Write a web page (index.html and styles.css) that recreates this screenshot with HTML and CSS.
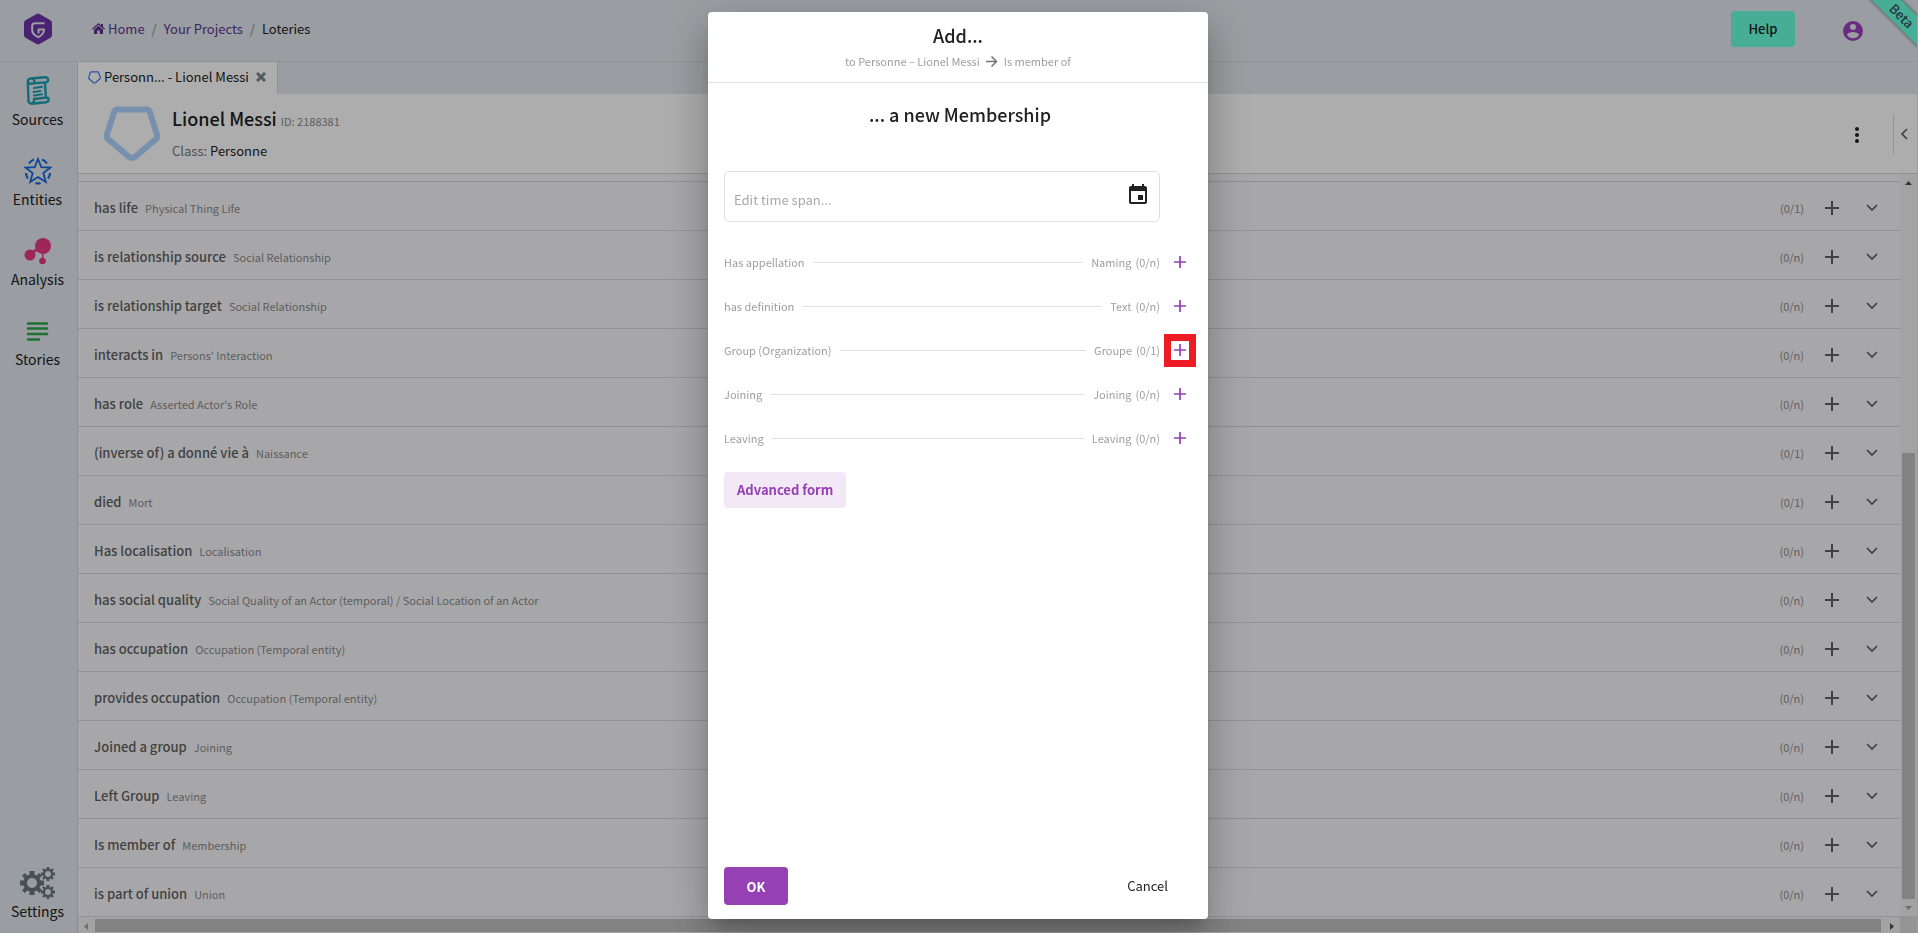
FILE: index.html
```html
<!doctype html>
<html lang="en">
<head>
  <meta charset="UTF-8"/>
  <meta content="width=device-width, initial-scale=1" name="viewport">
  <title>Loteries</title>
  <link rel="stylesheet" href="styles.css">
</head>
<body>
<svg class="sprite" aria-hidden="true">
  <symbol id="plus" viewBox="0 0 14 14"><path d="M6 0h2v6h6v2H8v6H6V8H0V6h6z"/></symbol>
  <symbol id="chevron" viewBox="0 0 12 8"><path d="M1 1l5 5 5-5" fill="none" stroke="currentColor" stroke-width="1.700"/></symbol>
  <symbol id="pentagon" viewBox="0 0 56 56"><path d="M14 3.500h28q3 0 4 3l7 22q1 3-1.500 5l-20 17q-3.500 2.500-7 0l-20-17Q2 31.500 3 28.500l7-22q1-3 4-3z" fill="none" stroke="currentColor" stroke-linejoin="round"/></symbol>
  <symbol id="gear" viewBox="0 0 24 24"><path fill-rule="evenodd" d="M9.500 0h5v3.500l2.200.9L19.200 2 22 4.800l-2.400 2.500.9 2.200H24v5h-3.500l-.9 2.200 2.400 2.500-2.800 2.800-2.500-2.400-2.200.9V24h-5v-3.500l-2.200-.9L4.800 22 2 19.200l2.400-2.500-.9-2.200H0v-5h3.500l.9-2.200L2 4.800 4.800 2l2.500 2.400 2.200-.9zM12 7a5 5 0 1 0 0 10 5 5 0 0 0 0-10z"/></symbol>
</svg>

<div class="app">
  <header class="topbar">
    <a class="logo" href="#" aria-label="Start">
      <svg width="28" height="32" viewBox="0 0 28 32"><path fill="#6e33a9" d="M12.500 1q1.500-.9 3 0l11 6.300Q28 8.200 28 10v12q0 1.800-1.500 2.700l-11 6.300q-1.500.9-3 0l-11-6.300Q0 23.800 0 22V10q0-1.800 1.500-2.700z"/><path fill="none" stroke="#e4e8ee" stroke-width="2" stroke-linejoin="round" d="M20.500 10.200H11q-2.800 0-2.800 2.500v4.500q0 4.300 6.300 7 5.500-3 5.500-7.700h-5.500v4"/></svg>
    </a>
    <nav class="breadcrumb">
      <a href="#"><svg class="home" width="13" height="11" viewBox="0 0 13 11"><path d="M6.500 0L9 2.200V1h2v3l2 1.800-.8.900L6.500 1.700.8 6.700 0 5.800zM6.500 2.800L11 6.700V11H7.800V7.600H5.200V11H2V6.700z"/></svg>Home</a>
      <span class="sep">/</span>
      <a href="#">Your Projects</a>
      <span class="sep">/</span>
      <span>Loteries</span>
    </nav>
    <button class="help" type="button">Help</button>
    <button class="user" type="button" aria-label="Account">
      <svg width="20" height="20" viewBox="0 0 20 20"><path fill-rule="evenodd" d="M10 0a10 10 0 1 0 0 20 10 10 0 0 0 0-20zm0 3a3 3 0 1 1 0 6 3 3 0 0 1 0-6zm0 14.200a7.200 7.200 0 0 1-6-3.200c0-2 4-3.100 6-3.100s6 1.100 6 3.100a7.200 7.200 0 0 1-6 3.200z"/></svg>
    </button>
    <div class="ribbon"><span>Beta</span></div>
  </header>

  <nav class="sidebar">
    <a href="#">
      <svg width="24" height="29" viewBox="0 1 24 29"><g fill="none" stroke="#1ba0b4" stroke-width="2.400" stroke-linecap="round" stroke-linejoin="round"><path d="M4.500 3.500L19 2.200c4-.2 4.500 5.100 0 5.200L8 8.300M4.500 3.500C1 4 1.500 9 4.500 8.800L8 8.300C9 5 7.500 3 4.500 3.500zM1.800 6.500L2.500 26c.5 4 6.500 3 5.500-2l12-1.500c3.500 0 3.500 4.300 0 4.800L5.500 28.700M19 7.500l.8 14.500"/><path stroke-width="2" d="M8 13l8-1.200M7.500 17l7-1M8 20.500l8-1.200"/></g></svg>
      Sources
    </a>
    <a href="#">
      <svg width="28" height="28" viewBox="0 0 28 28"><g fill="none" stroke="#1668e0"><path stroke-width="1.800" d="M14 2l3.300 8.200 9 .4-7 5.500 2.500 8.900-7.800-5-7.800 5 2.500-8.900-7-5.500 9-.4z"/><path stroke-width="2.200" d="M5 6.500q2-3 5-4M18 2.500q3 1 5 4M2 16q0 3 2 5.500M26 16q0 3-2 5.500M11.500 26q2.500 1 5 0"/></g></svg>
      Entities
    </a>
    <a href="#">
      <svg width="28" height="28" viewBox="0 0 28 28"><g fill="#e83a82"><circle cx="19" cy="9" r="8"/><circle cx="6" cy="18" r="5.500"/><circle cx="18.500" cy="24" r="3.300"/><path d="M18 14h1.500v9H18zM8 14l6-4 1.500 2.500-6 4z"/></g></svg>
      Analysis
    </a>
    <a href="#">
      <svg width="28" height="28" viewBox="0 0 28 28"><path d="M4 6.500h19M4 11.500h19M4 17h19M4 22.500h11" stroke="#27a844" stroke-width="2.600" stroke-linecap="round"/></svg>
      Stories
    </a>
    <a class="settings" href="#">
      <svg class="gears" width="36" height="32" viewBox="0 0 36 32"><use href="#gear" x="0" y="4" width="24" height="24"/><use href="#gear" x="21" y="0" width="14" height="14"/><use href="#gear" x="21" y="18" width="14" height="14"/></svg>
      Settings
    </a>
  </nav>

  <main class="content">
    <div class="tabs">
      <div class="tab">
        <svg class="tab-icon" width="13" height="13"><use href="#pentagon"/></svg>
        <span>Personn... - Lionel Messi</span>
        <button type="button" aria-label="Close tab"><svg width="10" height="10" viewBox="0 0 10 10"><path d="M1 1l8 8M9 1L1 9" stroke="#7b8488" stroke-width="3"/></svg></button>
      </div>
    </div>

    <section class="entity">
      <svg class="entity-icon" width="56" height="56"><use href="#pentagon"/></svg>
      <div class="entity-text">
        <h1>Lionel Messi <small>ID: 2188381</small></h1>
        <p>Class: <span>Personne</span></p>
      </div>
      <button class="more" type="button" aria-label="More"><svg width="4" height="16" viewBox="0 0 4 16"><circle cx="2" cy="2" r="2"/><circle cx="2" cy="8" r="2"/><circle cx="2" cy="14" r="2"/></svg></button>
      <button class="collapse" type="button" aria-label="Open panel"><svg width="12" height="8"><use href="#chevron"/></svg></button>
    </section>

    <div class="scroller">
      <ul class="fields">
        <li><b>has life</b><span>Physical Thing Life</span><em>(0/1)</em><button aria-label="Add"><svg width="14" height="14"><use href="#plus"/></svg></button><button aria-label="Expand"><svg width="12" height="8"><use href="#chevron"/></svg></button></li>
        <li><b>is relationship source</b><span>Social Relationship</span><em>(0/n)</em><button aria-label="Add"><svg width="14" height="14"><use href="#plus"/></svg></button><button aria-label="Expand"><svg width="12" height="8"><use href="#chevron"/></svg></button></li>
        <li><b>is relationship target</b><span>Social Relationship</span><em>(0/n)</em><button aria-label="Add"><svg width="14" height="14"><use href="#plus"/></svg></button><button aria-label="Expand"><svg width="12" height="8"><use href="#chevron"/></svg></button></li>
        <li><b>interacts in</b><span>Persons' Interaction</span><em>(0/n)</em><button aria-label="Add"><svg width="14" height="14"><use href="#plus"/></svg></button><button aria-label="Expand"><svg width="12" height="8"><use href="#chevron"/></svg></button></li>
        <li><b>has role</b><span>Asserted Actor's Role</span><em>(0/n)</em><button aria-label="Add"><svg width="14" height="14"><use href="#plus"/></svg></button><button aria-label="Expand"><svg width="12" height="8"><use href="#chevron"/></svg></button></li>
        <li><b>(inverse of) a donné vie à</b><span>Naissance</span><em>(0/1)</em><button aria-label="Add"><svg width="14" height="14"><use href="#plus"/></svg></button><button aria-label="Expand"><svg width="12" height="8"><use href="#chevron"/></svg></button></li>
        <li><b>died</b><span>Mort</span><em>(0/1)</em><button aria-label="Add"><svg width="14" height="14"><use href="#plus"/></svg></button><button aria-label="Expand"><svg width="12" height="8"><use href="#chevron"/></svg></button></li>
        <li><b>Has localisation</b><span>Localisation</span><em>(0/n)</em><button aria-label="Add"><svg width="14" height="14"><use href="#plus"/></svg></button><button aria-label="Expand"><svg width="12" height="8"><use href="#chevron"/></svg></button></li>
        <li><b>has social quality</b><span>Social Quality of an Actor (temporal) / Social Location of an Actor</span><em>(0/n)</em><button aria-label="Add"><svg width="14" height="14"><use href="#plus"/></svg></button><button aria-label="Expand"><svg width="12" height="8"><use href="#chevron"/></svg></button></li>
        <li><b>has occupation</b><span>Occupation (Temporal entity)</span><em>(0/n)</em><button aria-label="Add"><svg width="14" height="14"><use href="#plus"/></svg></button><button aria-label="Expand"><svg width="12" height="8"><use href="#chevron"/></svg></button></li>
        <li><b>provides occupation</b><span>Occupation (Temporal entity)</span><em>(0/n)</em><button aria-label="Add"><svg width="14" height="14"><use href="#plus"/></svg></button><button aria-label="Expand"><svg width="12" height="8"><use href="#chevron"/></svg></button></li>
        <li><b>Joined a group</b><span>Joining</span><em>(0/n)</em><button aria-label="Add"><svg width="14" height="14"><use href="#plus"/></svg></button><button aria-label="Expand"><svg width="12" height="8"><use href="#chevron"/></svg></button></li>
        <li><b>Left Group</b><span>Leaving</span><em>(0/n)</em><button aria-label="Add"><svg width="14" height="14"><use href="#plus"/></svg></button><button aria-label="Expand"><svg width="12" height="8"><use href="#chevron"/></svg></button></li>
        <li><b>Is member of</b><span>Membership</span><em>(0/n)</em><button aria-label="Add"><svg width="14" height="14"><use href="#plus"/></svg></button><button aria-label="Expand"><svg width="12" height="8"><use href="#chevron"/></svg></button></li>
        <li><b>is part of union</b><span>Union</span><em>(0/n)</em><button aria-label="Add"><svg width="14" height="14"><use href="#plus"/></svg></button><button aria-label="Expand"><svg width="12" height="8"><use href="#chevron"/></svg></button></li>
      </ul>
      <div class="bar bar-v">
        <svg width="17" height="17" viewBox="0 0 17 17"><path d="M5 11h7L8.500 7z" fill="#505050"/></svg>
        <div class="track"><div class="thumb"></div></div>
        <svg width="17" height="17" viewBox="0 0 17 17"><path d="M5 7h7l-3.500 4z" fill="#a3a3a3"/></svg>
      </div>
      <div class="bar bar-h">
        <svg width="17" height="17" viewBox="0 0 17 17"><path d="M10 6v7L6 9.500z" fill="#a3a3a3"/></svg>
        <div class="track"><div class="thumb"></div></div>
        <svg width="17" height="17" viewBox="0 0 17 17"><path d="M7 6v7l4-3.500z" fill="#505050"/></svg>
      </div>
      <div class="corner"></div>
    </div>
  </main>
</div>

<div class="backdrop">
  <div class="dialog" role="dialog" aria-labelledby="dialogTitle">
    <header class="dialog-head">
      <h2 id="dialogTitle">Add...</h2>
      <p>to Personne – Lionel Messi <svg width="12" height="12" viewBox="0 0 12 12"><path d="M0 6.500h10.500M5.500 1.500l5 5-5 5" fill="none" stroke="#757575" stroke-width="1.500"/></svg> Is member of</p>
    </header>
    <form class="dialog-body">
      <h2>... a new Membership</h2>
      <div class="timespan">
        <input type="text" placeholder="Edit time span..." aria-label="Time span">
        <button type="button" aria-label="Open calendar"><svg width="24" height="24" viewBox="0 0 24 24"><path d="M17 12h-5v5h5v-5zM16 1v2H8V1H6v2H5c-1.110 0-1.990.9-1.990 2L3 19c0 1.100.89 2 2 2h14c1.100 0 2-.9 2-2V5c0-1.100-.9-2-2-2h-1V1h-2zm3 18H5V8h14v11z"/></svg></button>
      </div>
      <div class="prop"><span>Has appellation</span><hr><span>Naming</span><span class="count">(0/n)</span><button type="button" aria-label="Add naming"><svg width="12" height="12"><use href="#plus"/></svg></button></div>
      <div class="prop"><span>has definition</span><hr><span>Text</span><span class="count">(0/n)</span><button type="button" aria-label="Add text"><svg width="12" height="12"><use href="#plus"/></svg></button></div>
      <div class="prop"><span>Group (Organization)</span><hr><span>Groupe</span><span class="count">(0/1)</span><button class="marked" type="button" aria-label="Add groupe"><svg width="12" height="12"><use href="#plus"/></svg></button></div>
      <div class="prop"><span>Joining</span><hr><span>Joining</span><span class="count">(0/n)</span><button type="button" aria-label="Add joining"><svg width="12" height="12"><use href="#plus"/></svg></button></div>
      <div class="prop"><span>Leaving</span><hr><span>Leaving</span><span class="count">(0/n)</span><button type="button" aria-label="Add leaving"><svg width="12" height="12"><use href="#plus"/></svg></button></div>
      <button class="advanced" type="button">Advanced form</button>
      <div class="actions">
        <button class="ok" type="submit">OK</button>
        <button class="cancel" type="button">Cancel</button>
      </div>
    </form>
  </div>
</div>
</body>
</html>
```
FILE: styles.css
```css
*, *:before {
  box-sizing: border-box;
}

body {
  margin: 0;
  font-family: "Noto Sans CJK SC", "Noto Sans", sans-serif;
  font-size: 13px;
  line-height: 20px;
  color: #212121;
}

h1, h2, p, ul {
  margin: 0;
  padding: 0;
  font-weight: 400;
}

a {
  color: inherit;
  text-decoration: none;
}

button {
  display: flex;
  align-items: center;
  justify-content: center;
  padding: 0;
  border: 0;
  background: none;
  font: inherit;
  color: inherit;
}

svg {
  display: block;
  flex: none;
  fill: currentColor;
}

.sprite {
  position: absolute;
  width: 0;
  height: 0;
}

.app {
  display: grid;
  grid-template-columns: 78px minmax(0, 1fr);
  grid-template-rows: 62px minmax(0, 1fr);
  height: 100vh;
  padding: 0 1px 0 0;
  background: #e4e8ee;
}

/* top bar */
.topbar {
  position: relative;
  grid-column: 1 / 3;
  display: flex;
  align-items: center;
  padding-bottom: 4px;
  border-bottom: 1px solid #d6d9de;
  overflow: hidden;
}

.logo {
  width: 92px;
  padding-left: 24px;
}

.breadcrumb {
  display: flex;
  gap: 7px;
  flex: 1;
}

.breadcrumb a {
  display: flex;
  align-items: center;
  color: #5e3391;
}

.breadcrumb .sep {
  color: #868c94;
}

.breadcrumb .home {
  margin-right: 3px;
}

.help {
  width: 64px;
  height: 36px;
  border-radius: 4px;
  background: #6bffdd;
  font-weight: 500;
}

.user {
  width: 20px;
  margin: 4px 54px 0 48px;
  color: #9d41bd;
}

.ribbon {
  position: absolute;
  top: 5px;
  right: -45px;
  display: flex;
  align-items: center;
  justify-content: center;
  width: 120px;
  height: 21px;
  background: #6bffdd;
  box-shadow: 0 0 4px rgba(0, 0, 0, .6);
  font-weight: 500;
  line-height: 12px;
  color: #34505a;
  transform: rotate(45deg);
}

/* sidebar */
.sidebar {
  display: flex;
  flex-direction: column;
  padding-bottom: 12px;
  border-right: 1px solid #d0d3d8;
  font-size: 14px;
}

.sidebar a {
  display: flex;
  flex-direction: column;
  align-items: center;
  justify-content: flex-end;
  gap: 4px;
  height: 80px;
  padding: 0 2px 13px 0;
}

.sidebar .settings {
  gap: 2px;
  height: auto;
  margin-top: auto;
  padding-bottom: 0;
}

.gears {
  color: #69767e;
}

/* content */
.content {
  display: flex;
  flex-direction: column;
  min-height: 0;
}

.tabs {
  display: flex;
  height: 32px;
}

.tab {
  display: flex;
  align-items: center;
  gap: 3px;
  padding: 0 11px 2px 10px;
  border-right: 1px solid #d0d3d8;
  background: #fff;
}

.tab button {
  margin-left: 4px;
}

.tab-icon {
  color: #3a7bea;
  stroke-width: 5px;
}

.entity {
  display: flex;
  align-items: center;
  height: 80px;
  padding-left: 26px;
  border-bottom: 1px solid #d8d8d8;
  background: #fff;
}

.entity-icon {
  color: #b0d5ff;
  stroke-width: 6px;
}

.entity-text {
  flex: 1;
  margin-left: 12px;
}

.entity h1 {
  font-size: 18px;
  line-height: 32px;
  font-weight: 500;
}

.entity small {
  font-size: 11px;
  font-weight: 400;
  color: #8a8a8a;
}

.entity p {
  line-height: 28px;
  color: #757575;
}

.entity p span {
  color: #212121;
}

.more {
  width: 36px;
  height: 36px;
  padding-top: 2px;
  margin-right: 18px;
}

.collapse {
  width: 24px;
  height: 40px;
  padding-right: 4px;
  border-left: 1px solid #d8d8d8;
  color: #616161;
}

.collapse svg {
  transform: rotate(90deg);
}

.scroller {
  display: grid;
  grid-template-columns: minmax(0, 1fr) 17px;
  grid-template-rows: minmax(0, 1fr) 17px;
  flex: 1;
  min-height: 0;
  background: #f7f7fa;
}

.fields {
  padding-top: 7px;
  overflow: hidden;
  list-style: none;
}

.fields li {
  display: flex;
  align-items: center;
  height: 49px;
  padding: 3px 8px 0 16px;
  border-top: 1px solid #d8d8da;
}

.fields b {
  font-weight: 500;
  color: #616161;
}

.fields span {
  flex: 1;
  margin-left: 7px;
  font-size: 11px;
  color: #8a8a8a;
}

.fields em {
  margin-right: 8px;
  font-size: 11px;
  font-style: normal;
  color: #8a8a8a;
}

.fields button {
  width: 40px;
  height: 40px;
  color: #616161;
}

.bar {
  display: flex;
  background: #f1f1f1;
}

.bar-v {
  flex-direction: column;
}

.bar-h {
  border-top: 1px solid #d8d8da;
}

.track {
  display: flex;
  flex: 1;
}

.thumb {
  background: #c1c1c1;
}

.bar-v .thumb {
  width: 13px;
  height: 63%;
  margin: auto auto 0;
}

.bar-h .thumb {
  width: 100%;
  height: 13px;
  margin: auto 2px 1px 0;
}

.corner {
  background: #dcdcdc;
}

/* dialog */
.backdrop {
  position: fixed;
  inset: 0;
  display: flex;
  justify-content: center;
  padding: 12px 2px 14px 0;
  background: rgba(0, 0, 0, .32);
}

.dialog {
  display: flex;
  flex-direction: column;
  width: 500px;
  border-radius: 4px;
  background: #fff;
  box-shadow: 0 11px 15px -7px rgba(0, 0, 0, .2), 0 24px 38px 3px rgba(0, 0, 0, .14), 0 9px 46px 8px rgba(0, 0, 0, .12);
}

.dialog h2 {
  font-size: 18px;
  font-weight: 500;
  line-height: 32px;
  text-align: center;
}

.dialog-head {
  height: 71px;
  padding-top: 7px;
  border-bottom: 1px solid #e0e0e0;
}

.dialog-head p {
  display: flex;
  align-items: center;
  justify-content: center;
  gap: 6px;
  font-size: 11px;
  color: #9e9e9e;
}

.dialog-body {
  display: flex;
  flex-direction: column;
  flex: 1;
  padding: 15px 12px 14px 16px;
}

.timespan {
  display: flex;
  align-items: center;
  width: 436px;
  height: 51px;
  margin: 41px 0 18px;
  padding: 0 9px;
  border: 1px solid #e0e0e0;
  border-radius: 5px;
}

.timespan input {
  flex: 1;
  padding: 6px 0 0;
  border: 0;
  outline: 0;
  background: none;
  font: inherit;
}

.timespan ::placeholder {
  color: #a8a8a8;
}

.timespan button {
  margin-bottom: 4px;
}

.prop {
  display: flex;
  align-items: center;
  height: 44px;
  font-size: 11px;
  color: #9e9e9e;
}

.prop hr {
  flex: 1;
  margin: 0 8px;
  border: 0;
  border-top: 1px solid #e0e0e0;
}

.prop .count {
  margin: 0 4px;
}

.prop button {
  width: 32px;
  height: 33px;
  color: #9641b3;
}

.prop .marked {
  border: 7px solid #ed1c24;
}

.advanced {
  align-self: flex-start;
  height: 36px;
  margin-top: 12px;
  padding: 0 13px;
  border-radius: 4px;
  background: #f3e8f6;
  font-weight: 700;
  color: #9641b3;
}

.actions {
  display: flex;
  align-items: center;
  justify-content: space-between;
  margin-top: auto;
}

.ok {
  width: 64px;
  height: 38px;
  padding-top: 2px;
  border-radius: 4px;
  background: #9641b3;
  font-weight: 700;
  color: #fff;
}

.cancel {
  height: 36px;
  padding: 0 28px;
}
```
